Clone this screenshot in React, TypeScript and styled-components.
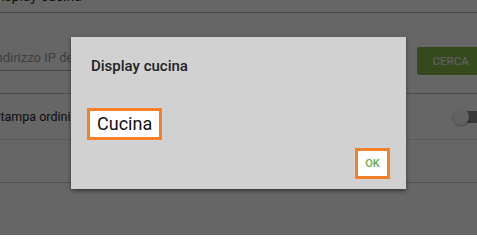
import React from 'react';
import styled, {createGlobalStyle} from 'styled-components';

const GlobalStyle = createGlobalStyle`
  html, body {
    margin: 0;
    padding: 0;
    width: 477px;
    height: 235px;
    overflow: hidden;
    background: #ffffff;
    font-family: Roboto, "Liberation Sans", sans-serif;
  }
`;

const Screen = styled.div`
  position: relative;
  width: 477px;
  height: 235px;
  overflow: hidden;
`;

// settings list behind the dialog (scrolled a little)
const Page = styled.div`
  width: 495px;
  margin: -14px 0 0 -8px;
  display: flex;
  flex-direction: column;
`;

const Row = styled.div<{$line: string; $h?: number}>`
  display: flex;
  align-items: center;
  border-bottom: 1px solid ${p => p.$line};
  ${p => (p.$h ? `height: ${p.$h}px;` : '')}
`;

const TopRow = styled(Row)`
  padding-bottom: 6px;
`;

const SearchRow = styled(Row)`
  align-items: flex-start;
  padding: 34px 0 18px;
`;

const Label = styled.span<{$size?: number; $shift?: number}>`
  flex: 1;
  margin-left: ${p => p.$shift || 0}px;
  font-size: ${p => p.$size || 14}px;
  line-height: 20px;
  color: #262626;
`;

const Input = styled.div`
  flex: 1;
  margin-right: 16px;
  padding: 1px 0 2px;
  font-size: 13px;
  line-height: 20px;
  color: #9a9a9a;
  border-bottom: 1px solid #a8a8a8;
  white-space: nowrap;
`;

const SearchButton = styled.div`
  height: 28px;
  padding: 0 16px;
  margin-right: 2px;
  display: flex;
  align-items: center;
  background: #86b948;
  border-radius: 2px;
  color: #e6e6e6;
  font-size: 11.5px;
  font-weight: 500;
`;

const Toggle = styled.div`
  position: relative;
  width: 32px;
  height: 16px;
  margin-right: 2px;
  display: flex;
  align-items: center;
`;

const Track = styled.div`
  width: 32px;
  height: 12px;
  border-radius: 6px;
  background: #8a8a8a;
`;

const Thumb = styled.div`
  position: absolute;
  left: 0;
  top: 0;
  width: 16px;
  height: 16px;
  border-radius: 50%;
  background: #f4f4f4;
  box-shadow: 0 1px 2px rgba(0, 0, 0, 0.35);
`;

const Overlay = styled.div`
  position: absolute;
  inset: 0;
  background: rgba(0, 0, 0, 0.6);
  display: flex;
  justify-content: center;
  align-items: center;
`;

const Dialog = styled.div`
  width: 335px;
  height: 152px;
  margin-bottom: 9px;
  box-sizing: border-box;
  background: #d1d1d1;
  box-shadow: 0 2px 4px rgba(0, 0, 0, 0.45);
  display: flex;
  flex-direction: column;
  padding: 19px 16px 10px;
`;

const Title = styled.div`
  padding-left: 4px;
  font-size: 15px;
  font-weight: 500;
  line-height: 20px;
  color: #222222;
`;

const Focused = styled.div`
  border: 3px solid #f3812c;
  background: #ffffff;
`;

const Value = styled(Focused)`
  align-self: flex-start;
  margin-top: 32px;
  padding: 0 7px;
  font-size: 18px;
  line-height: 26px;
  color: #111111;
`;

const Actions = styled.div`
  margin-top: 8px;
  display: flex;
  justify-content: flex-end;
`;

const OkButton = styled(Focused)`
  width: 29px;
  height: 25px;
  display: flex;
  align-items: center;
  justify-content: center;
  font-size: 11px;
  font-weight: 500;
  color: #6aaa46;
`;

export default function App(): JSX.Element {
  return (
    <Screen>
      <GlobalStyle />
      <Page>
        <TopRow $line="#bcbcbc">
          <Label>Display cucina</Label>
        </TopRow>
        <SearchRow $line="#c4c4c4">
          <Input>Indirizzo IP del display</Input>
          <SearchButton>CERCA</SearchButton>
        </SearchRow>
        <Row $line="#e6e6e6" $h={45}>
          <Label $size={12.5} $shift={1}>Stampa ordini</Label>
          <Toggle>
            <Track />
            <Thumb />
          </Toggle>
        </Row>
        <Row $line="#c8c8c8" $h={42} />
      </Page>
      <Overlay>
        <Dialog>
          <Title>Display cucina</Title>
          <Value>Cucina</Value>
          <Actions>
            <OkButton>OK</OkButton>
          </Actions>
        </Dialog>
      </Overlay>
    </Screen>
  );
}
